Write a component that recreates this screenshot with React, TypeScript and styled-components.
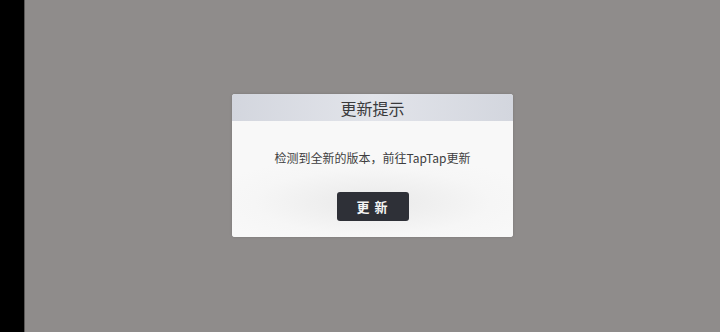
import styled, { createGlobalStyle } from "styled-components";

const GlobalStyle = createGlobalStyle`
  html, body {
    margin: 0;
    padding: 0;
    width: 100%;
    height: 100%;
  }
  #root {
    height: 100%;
  }
  body {
    font-family: "Noto Sans CJK SC", "Noto Sans", sans-serif;
  }
`;

function App() {
  return (
    <>
      <GlobalStyle />
      <Screen>
        <Notch />
        <Stage>
          <Dialog>
            <Header>更新提示</Header>
            <Body>
              <Message>检测到全新的版本，前往TapTap更新</Message>
              <UpdateButton>更 新</UpdateButton>
            </Body>
          </Dialog>
        </Stage>
      </Screen>
    </>
  );
}

export default App;

const Screen = styled.div`
  display: flex;
  width: 720px;
  height: 332px;
  overflow: hidden;
`;

const Notch = styled.div`
  width: 24px;
  flex-shrink: 0;
  background-color: #000;
  border-right: 1px solid #5a5857;
`;

const Stage = styled.div`
  flex: 1;
  display: flex;
  justify-content: center;
  padding-top: 94px;
  background-color: #8f8c8b;
`;

const Dialog = styled.section`
  width: 281px;
  height: 143px;
  display: flex;
  flex-direction: column;
  border-radius: 3px;
  overflow: hidden;
  background-color: #f3f3f3;
  box-shadow: 0 0 3px rgba(0, 0, 0, 0.15);
`;

const Header = styled.header`
  height: 27px;
  display: flex;
  align-items: center;
  justify-content: center;
  background: linear-gradient(90deg, #d3d6de 0%, #e2e4ea 50%, #d3d6de 100%);
  color: #3a3a3c;
  font-size: 16px;
  line-height: 1;
`;

const Body = styled.div`
  flex: 1;
  display: flex;
  flex-direction: column;
  align-items: center;
  padding-top: 30px;
  background: radial-gradient(ellipse 60% 40% at 50% 70%, #e9e9e9 0%, #f6f6f6 70%, #f8f8f8 100%);
`;

const Message = styled.p`
  margin: 0;
  font-size: 12px;
  line-height: 14px;
  color: #3e3e40;
`;

const UpdateButton = styled.button`
  margin-top: 27px;
  width: 72px;
  height: 29px;
  border: none;
  border-radius: 3px;
  background-color: #2e3037;
  color: #f4f4f4;
  font-family: "Noto Sans CJK SC", sans-serif;
  font-size: 13px;
  font-weight: 700;
  letter-spacing: 1px;
  cursor: pointer;
`;
